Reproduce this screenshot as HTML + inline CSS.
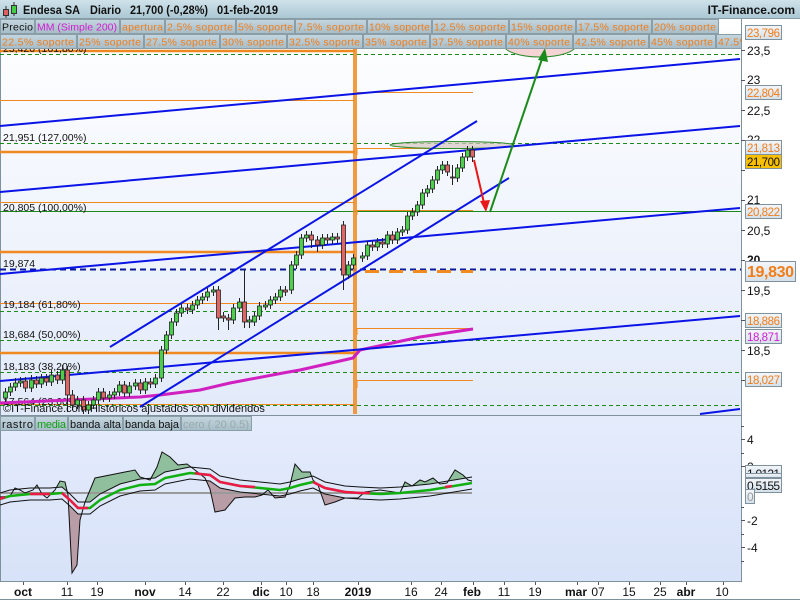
<!DOCTYPE html>
<html><head><meta charset="utf-8"><style>
body{margin:0;width:800px;height:600px;overflow:hidden;font-family:"Liberation Sans",sans-serif}
svg text{font-family:"Liberation Sans",sans-serif}
</style></head><body>
<svg width="800" height="600" viewBox="0 0 800 600" xmlns="http://www.w3.org/2000/svg">
<defs>
<linearGradient id="hd" x1="0" y1="0" x2="0" y2="1"><stop offset="0" stop-color="#cfe2ea"/><stop offset="1" stop-color="#a9c6d2"/></linearGradient>
<linearGradient id="bx" x1="0" y1="0" x2="0" y2="1"><stop offset="0" stop-color="#c4d6df"/><stop offset="1" stop-color="#a6bcc8"/></linearGradient>
<linearGradient id="mb" x1="0" y1="0" x2="0" y2="1"><stop offset="0" stop-color="#ffffff"/><stop offset="1" stop-color="#e2eafa"/></linearGradient>
<linearGradient id="ob" x1="0" y1="0" x2="0" y2="1"><stop offset="0" stop-color="#e4ecfc"/><stop offset="1" stop-color="#d8e2f8"/></linearGradient>
<linearGradient id="lb" x1="0" y1="0" x2="0" y2="1"><stop offset="0" stop-color="#f4f7fb"/><stop offset="1" stop-color="#d4e0ea"/></linearGradient>
<clipPath id="cg"><polygon points="0,493 10,490 30,488 50,488 62,487 70,494 78,502 90,502 100,494 120,484 140,479 155,478 165,472 175,470 190,467 200,468 210,469 220,476 240,480 260,482 280,484 290,482 300,479 313,476 325,482 345,486 360,487 380,488 400,487 430,484 472,477 472,416 0,416"/></clipPath>
<clipPath id="cr"><polygon points="0,505 10,502 30,500 50,500 62,499 70,506 78,514 90,514 100,506 120,496 140,491 155,490 165,484 175,482 190,479 200,480 210,481 220,488 240,492 260,494 280,496 290,494 300,491 313,488 325,494 345,498 360,499 380,500 400,499 430,496 472,489 472,582 0,582"/></clipPath>
</defs>
<rect width="800" height="600" fill="#fff"/>
<rect x="0" y="0" width="800" height="19" fill="url(#hd)"/>
<line x1="0" y1="18.5" x2="800" y2="18.5" stroke="#8a9ca6"/>
<line x1="6" y1="6" x2="6" y2="18" stroke="#333"/><rect x="3.5" y="9.5" width="5" height="6" fill="#e06060" stroke="#333"/>
<line x1="14" y1="2" x2="14" y2="16" stroke="#333"/><rect x="11.5" y="5.5" width="5" height="8" fill="#44cc44" stroke="#333"/>
<g font-size="12" font-weight="bold" fill="#111">
<text x="23" y="14" textLength="57" lengthAdjust="spacingAndGlyphs">Endesa SA</text><text x="90" y="14" textLength="31" lengthAdjust="spacingAndGlyphs">Diario</text><text x="130" y="14" textLength="78" lengthAdjust="spacingAndGlyphs">21,700 (-0,28%)</text><text x="217" y="14" textLength="61" lengthAdjust="spacingAndGlyphs">01-feb-2019</text>
<text x="795" y="14" text-anchor="end">IT-Finance.com</text></g>
<rect x="0" y="19" width="741" height="396" fill="url(#mb)"/>
<rect x="741" y="19" width="59" height="563" fill="#fff"/>
<rect x="0" y="416" width="741" height="166" fill="url(#ob)"/>
<line x1="0" y1="415.5" x2="741" y2="415.5" stroke="#7f919c"/>
<line x1="0" y1="581.5" x2="741" y2="581.5" stroke="#7f919c"/>
<line x1="741.5" y1="19" x2="741.5" y2="582" stroke="#7f919c"/>
<line x1="0.5" y1="19" x2="0.5" y2="582" stroke="#7f919c"/>

<g stroke="#1a8a1a" stroke-dasharray="4,3" stroke-width="1">
<line x1="0" y1="54.5" x2="741" y2="54.5"/><line x1="0" y1="143.5" x2="741" y2="143.5"/>
<line x1="0" y1="311.5" x2="741" y2="311.5"/><line x1="0" y1="340.5" x2="741" y2="340.5"/>
<line x1="0" y1="372.5" x2="741" y2="372.5"/><line x1="0" y1="405.5" x2="741" y2="405.5"/>
</g>
<line x1="0" y1="211.5" x2="741" y2="211.5" stroke="#1a8a1a"/>
<line x1="0" y1="269.5" x2="741" y2="269.5" stroke="#0a1a9a" stroke-width="2" stroke-dasharray="6,4"/>
<g stroke="#f08a20" fill="none">
<line x1="0" y1="51" x2="355" y2="51" stroke-width="2.5"/>
<line x1="0" y1="100.5" x2="355" y2="100.5"/>
<line x1="0" y1="152" x2="355" y2="152" stroke-width="2.5"/>
<line x1="0" y1="202.5" x2="355" y2="202.5"/>
<line x1="0" y1="252" x2="355" y2="252" stroke-width="2.5"/>
<line x1="0" y1="303.5" x2="355" y2="303.5"/>
<line x1="0" y1="353" x2="355" y2="353" stroke-width="2.5"/>
<line x1="0" y1="404.5" x2="355" y2="404.5"/>
<line x1="357" y1="92.5" x2="473" y2="92.5"/>
<polyline points="357,155 357,148.5 473,148.5"/>
<polyline points="357,215 357,210.5 473,210.5"/>
<line x1="365" y1="271.5" x2="473" y2="271.5" stroke-width="3" stroke-dasharray="14,10"/>
<polyline points="357,335 357,328.5 473,328.5"/>
<polyline points="357,388 357,380.5 473,380.5"/>
<line x1="355" y1="48" x2="355" y2="414" stroke-width="4" stroke-opacity="0.85"/>
</g>
<g font-size="10.5" fill="#111">
<text x="3" y="52">23,420 (161,80%)</text>
<text x="3" y="141">21,951 (127,00%)</text>
<text x="3" y="211">20,805 (100,00%)</text>
<text x="3" y="267">19,874</text>
<text x="3" y="308">19,184 (61,80%)</text>
<text x="3" y="338">18,684 (50,00%)</text>
<text x="3" y="370">18,183 (38,20%)</text>
<text x="3" y="405">17,564 (23,60%)</text>
</g>
<ellipse cx="540" cy="45" rx="36" ry="12" fill="#f4d4d4" stroke="#2a8a2a"/>
<ellipse cx="452" cy="145" rx="62" ry="3.5" fill="#d8c8c0" stroke="#2a8a2a" fill-opacity="0.7"/>
<polyline points="0,403 140,397 160,395 200,390 230,383 283,373 300,370 340,361 353,358 360,350 420,337 473,329" fill="none" stroke="#d020c0" stroke-width="3"/>
<g stroke="#0a14e6" stroke-width="2" fill="none">
<line x1="0" y1="126" x2="740" y2="59"/>
<line x1="0" y1="192" x2="740" y2="126"/>
<line x1="110" y1="347" x2="477" y2="121"/>
<line x1="140" y1="407" x2="509" y2="178"/>
<line x1="0" y1="274" x2="740" y2="208"/>
<line x1="0" y1="381" x2="740" y2="316"/>
<line x1="700" y1="414" x2="740" y2="409"/>
</g>
<line x1="490" y1="212" x2="543" y2="56" stroke="#1a8a1a" stroke-width="2"/>
<polygon points="545,48 538,60 548,62" fill="#1a8a1a"/>
<line x1="474" y1="160" x2="484" y2="203" stroke="#e81818" stroke-width="2"/>
<polygon points="486,212 480,201 490,200" fill="#e81818"/>
<path stroke="#222" stroke-width="1" fill="none" d="M5.5,388V402M10.5,383V396M15.5,378V391M20.5,377V387M25.5,377V392M31.5,375V392M36.5,376V388M41.5,374V388M46.5,374V386M51.5,370V386M57.5,371V384M62.5,365V384M67.5,366V412M72.5,390V410M77.5,396V409M83.5,396V414M88.5,401V414M93.5,396V409M98.5,388V404M103.5,388V402M109.5,391V402M114.5,388V399M119.5,381V396M124.5,381V397M129.5,382V397M135.5,379V390M140.5,379V394M145.5,378V394M150.5,378V388M155.5,374V388M161.5,346V382M166.5,331V354M171.5,318V339M176.5,309V326M181.5,304V317M187.5,304V314M192.5,301V314M197.5,296V309M202.5,293V304M207.5,288V301M213.5,286V296M218.5,286V330M223.5,312V322M228.5,314V330M233.5,304V324M239.5,298V312M244.5,270V328M249.5,316V328M254.5,312V326M259.5,302V320M265.5,301V310M270.5,296V309M275.5,293V304M280.5,286V301M285.5,286V296M291.5,261V294M296.5,251V269M301.5,234V259M306.5,231V242M311.5,231V248M317.5,236V252M322.5,234V249M327.5,234V244M332.5,233V244M337.5,233V243M343.5,221V290M348.5,261V279M353.5,254V269M362.5,252V262M367.5,241V260M372.5,241V251M377.5,238V251M382.5,238V248M387.5,231V248M392.5,231V244M397.5,228V244M402.5,226V236M407.5,212V234M412.5,208V220M417.5,201V216M422.5,189V209M427.5,185V197M432.5,176V193M437.5,166V184M442.5,161V174M447.5,161V176M452.5,165V185M457.5,164V182M462.5,153V172M467.5,146V161M472.5,146V162"/>
<g stroke="#222" stroke-width="0.8">
<g fill="#4cd04c">
<rect x="3.5" y="392" width="4" height="6"/><rect x="8.5" y="387" width="4" height="5"/><rect x="13.5" y="383" width="4" height="4"/><rect x="18.5" y="381" width="4" height="2"/>
<rect x="29.5" y="380" width="4" height="8"/><rect x="39.5" y="378" width="4" height="6"/><rect x="49.5" y="375" width="4" height="7"/><rect x="60.5" y="370" width="4" height="10"/>
<rect x="75.5" y="400" width="4" height="5"/><rect x="86.5" y="405" width="4" height="5"/><rect x="91.5" y="400" width="4" height="5"/><rect x="96.5" y="392" width="4" height="8"/>
<rect x="107.5" y="395" width="4" height="3"/><rect x="112.5" y="392" width="4" height="3"/><rect x="117.5" y="385" width="4" height="7"/><rect x="127.5" y="386" width="4" height="7"/>
<rect x="133.5" y="383" width="4" height="3"/><rect x="143.5" y="382" width="4" height="8"/><rect x="153.5" y="378" width="4" height="6"/><rect x="159.5" y="350" width="4" height="28"/>
<rect x="164.5" y="335" width="4" height="15"/><rect x="169.5" y="322" width="4" height="13"/><rect x="174.5" y="313" width="4" height="9"/><rect x="179.5" y="308" width="4" height="5"/>
<rect x="190.5" y="305" width="4" height="5"/><rect x="195.5" y="300" width="4" height="5"/><rect x="200.5" y="297" width="4" height="3"/><rect x="205.5" y="292" width="4" height="5"/><rect x="211.5" y="290" width="4" height="2"/>
<rect x="231.5" y="308" width="4" height="12"/><rect x="237.5" y="302" width="4" height="6"/><rect x="247.5" y="320" width="4" height="2"/><rect x="252.5" y="316" width="4" height="6"/>
<rect x="257.5" y="306" width="4" height="10"/><rect x="263.5" y="305" width="4" height="2"/><rect x="268.5" y="300" width="4" height="5"/><rect x="273.5" y="297" width="4" height="3"/><rect x="278.5" y="290" width="4" height="7"/>
<rect x="289.5" y="265" width="4" height="25"/><rect x="294.5" y="255" width="4" height="10"/><rect x="299.5" y="238" width="4" height="17"/><rect x="304.5" y="235" width="4" height="3"/>
<rect x="320.5" y="238" width="4" height="7"/><rect x="330.5" y="237" width="4" height="3"/><rect x="346.5" y="265" width="4" height="10"/><rect x="351.5" y="258" width="4" height="7"/>
<rect x="360.5" y="256" width="4" height="2"/><rect x="365.5" y="245" width="4" height="11"/><rect x="375.5" y="242" width="4" height="5"/><rect x="385.5" y="235" width="4" height="9"/>
<rect x="395.5" y="232" width="4" height="8"/><rect x="400.5" y="230" width="4" height="2"/><rect x="405.5" y="216" width="4" height="14"/><rect x="410.5" y="212" width="4" height="4"/>
<rect x="415.5" y="205" width="4" height="7"/><rect x="420.5" y="193" width="4" height="12"/><rect x="425.5" y="189" width="4" height="4"/><rect x="430.5" y="180" width="4" height="9"/>
<rect x="435.5" y="170" width="4" height="10"/><rect x="440.5" y="165" width="4" height="5"/><rect x="455.5" y="168" width="4" height="10"/><rect x="460.5" y="157" width="4" height="11"/><rect x="465.5" y="150" width="4" height="7"/>
</g>
<g fill="#e06666">
<rect x="23.5" y="381" width="4" height="7"/><rect x="34.5" y="380" width="4" height="4"/><rect x="44.5" y="378" width="4" height="4"/><rect x="55.5" y="375" width="4" height="5"/>
<rect x="65.5" y="370" width="4" height="25"/><rect x="70.5" y="395" width="4" height="10"/><rect x="81.5" y="400" width="4" height="10"/><rect x="101.5" y="392" width="4" height="6"/>
<rect x="122.5" y="385" width="4" height="8"/><rect x="138.5" y="383" width="4" height="7"/><rect x="148.5" y="382" width="4" height="2"/><rect x="185.5" y="308" width="4" height="2"/>
<rect x="216.5" y="290" width="4" height="28"/><rect x="221.5" y="316" width="4" height="2"/><rect x="226.5" y="318" width="4" height="2"/><rect x="242.5" y="302" width="4" height="20"/>
<rect x="283.5" y="290" width="4" height="2"/><rect x="309.5" y="235" width="4" height="5"/><rect x="315.5" y="240" width="4" height="5"/><rect x="325.5" y="238" width="4" height="2"/>
<rect x="335.5" y="237" width="4" height="2"/><rect x="341.5" y="225" width="4" height="50"/><rect x="370.5" y="245" width="4" height="2"/><rect x="380.5" y="242" width="4" height="2"/>
<rect x="390.5" y="235" width="4" height="5"/><rect x="445.5" y="165" width="4" height="7"/><rect x="450.5" y="177" width="4" height="1"/><rect x="470.5" y="150" width="4" height="7"/>
</g>
</g>
<text x="3" y="412" font-size="11" fill="#111">©IT-Finance.com Históricos ajustados con dividendos</text>

<g font-size="10.5" fill="#f07d1a">
<rect x="0.5" y="19.5" width="34" height="14" fill="url(#bx)" stroke="#8a9ea8"/><text x="2" y="30.5" fill="#111" textLength="31">Precio</text>
<rect x="35.5" y="19.5" width="84" height="14" fill="url(#bx)" stroke="#8a9ea8"/><text x="37" y="30.5" fill="#d21cd2" textLength="80">MM (Simple 200)</text>
<rect x="120.5" y="19.5" width="44" height="14" fill="url(#bx)" stroke="#8a9ea8"/><text x="122" y="30.5" textLength="41">apertura</text>
<rect x="165.5" y="19.5" width="70" height="14" fill="url(#bx)" stroke="#8a9ea8"/><text x="167" y="30.5" textLength="66">2.5% soporte</text>
<rect x="236.5" y="19.5" width="58" height="14" fill="url(#bx)" stroke="#8a9ea8"/><text x="238" y="30.5" textLength="55">5% soporte</text>
<rect x="295.5" y="19.5" width="71" height="14" fill="url(#bx)" stroke="#8a9ea8"/><text x="297" y="30.5" textLength="67">7.5% soporte</text>
<rect x="367.5" y="19.5" width="64" height="14" fill="url(#bx)" stroke="#8a9ea8"/><text x="369" y="30.5" textLength="61">10% soporte</text>
<rect x="432.5" y="19.5" width="76" height="14" fill="url(#bx)" stroke="#8a9ea8"/><text x="434" y="30.5" textLength="72">12.5% soporte</text>
<rect x="509.5" y="19.5" width="66" height="14" fill="url(#bx)" stroke="#8a9ea8"/><text x="511" y="30.5" textLength="62">15% soporte</text>
<rect x="576.5" y="19.5" width="75" height="14" fill="url(#bx)" stroke="#8a9ea8"/><text x="578" y="30.5" textLength="71">17.5% soporte</text>
<rect x="652.5" y="19.5" width="66" height="14" fill="url(#bx)" stroke="#8a9ea8"/><text x="654" y="30.5" textLength="62">20% soporte</text>
<rect x="0.5" y="34.5" width="76" height="14" fill="url(#bx)" stroke="#8a9ea8"/><text x="2" y="45.5" textLength="72">22.5% soporte</text>
<rect x="77.5" y="34.5" width="66" height="14" fill="url(#bx)" stroke="#8a9ea8"/><text x="79" y="45.5" textLength="62">25% soporte</text>
<rect x="144.5" y="34.5" width="75" height="14" fill="url(#bx)" stroke="#8a9ea8"/><text x="146" y="45.5" textLength="71">27.5% soporte</text>
<rect x="220.5" y="34.5" width="66" height="14" fill="url(#bx)" stroke="#8a9ea8"/><text x="222" y="45.5" textLength="62">30% soporte</text>
<rect x="287.5" y="34.5" width="75" height="14" fill="url(#bx)" stroke="#8a9ea8"/><text x="289" y="45.5" textLength="71">32.5% soporte</text>
<rect x="363.5" y="34.5" width="66" height="14" fill="url(#bx)" stroke="#8a9ea8"/><text x="365" y="45.5" textLength="62">35% soporte</text>
<rect x="430.5" y="34.5" width="75" height="14" fill="url(#bx)" stroke="#8a9ea8"/><text x="432" y="45.5" textLength="71">37.5% soporte</text>
<rect x="506.5" y="34.5" width="66" height="14" fill="url(#bx)" stroke="#8a9ea8"/><text x="508" y="45.5" textLength="62">40% soporte</text>
<rect x="573.5" y="34.5" width="75" height="14" fill="url(#bx)" stroke="#8a9ea8"/><text x="575" y="45.5" textLength="71">42.5% soporte</text>
<rect x="649.5" y="34.5" width="66" height="14" fill="url(#bx)" stroke="#8a9ea8"/><text x="651" y="45.5" textLength="62">45% soporte</text>
<svg x="716" y="34" width="25" height="15"><rect x="0.5" y="0.5" width="40" height="14" fill="url(#bx)" stroke="#8a9ea8"/><text x="2" y="11.5" textLength="71">47.5% soporte</text></svg>
</g>

<g stroke="#556" stroke-width="1">
<line x1="741" y1="50.5" x2="745" y2="50.5"/><line x1="741" y1="80.5" x2="745" y2="80.5"/><line x1="741" y1="110.5" x2="745" y2="110.5"/>
<line x1="741" y1="140.5" x2="745" y2="140.5"/><line x1="741" y1="170.5" x2="745" y2="170.5"/><line x1="741" y1="200.5" x2="745" y2="200.5"/>
<line x1="741" y1="230.5" x2="745" y2="230.5"/><line x1="741" y1="260.5" x2="745" y2="260.5"/><line x1="741" y1="290.5" x2="745" y2="290.5"/>
<line x1="741" y1="320.5" x2="745" y2="320.5"/><line x1="741" y1="350.5" x2="745" y2="350.5"/><line x1="741" y1="380.5" x2="745" y2="380.5"/>
</g>
<g font-size="12" fill="#111">
<text x="747" y="55">23,5</text><text x="747" y="84">23</text><text x="747" y="115">22,5</text><text x="747" y="144">22</text>
<text x="747" y="204">21</text><text x="747" y="235">20,5</text><text x="747" y="264" font-weight="bold">20</text><text x="747" y="295">19,5</text><text x="747" y="355">18,5</text>
</g>
<g font-size="11.5" fill="#f07d1a">
<rect x="745.5" y="25.5" width="36" height="14" fill="url(#lb)" stroke="#7f919c"/><text x="747" y="37" textLength="33">23,796</text>
<rect x="745.5" y="85.5" width="36" height="14" fill="url(#lb)" stroke="#7f919c"/><text x="747" y="97" textLength="33">22,804</text>
<rect x="745.5" y="140.5" width="36" height="14" fill="url(#lb)" stroke="#7f919c"/><text x="747" y="152" textLength="33">21,813</text>
<rect x="745.5" y="154.5" width="36" height="14" fill="#f8c000" stroke="#7f919c"/><text x="747" y="166" fill="#111" textLength="33">21,700</text>
<rect x="745.5" y="204.5" width="36" height="14" fill="url(#lb)" stroke="#7f919c"/><text x="747" y="216" textLength="33">20,822</text>
<rect x="745.5" y="261.5" width="50" height="20" fill="url(#lb)" stroke="#7f919c"/><text x="747" y="277" font-size="16" font-weight="bold" textLength="47">19,830</text>
<rect x="745.5" y="313.5" width="36" height="14" fill="url(#lb)" stroke="#7f919c"/><text x="747" y="325" textLength="33">18,886</text>
<rect x="745.5" y="329.5" width="36" height="14" fill="url(#lb)" stroke="#7f919c"/><text x="747" y="341" fill="#d21cd2" textLength="33">18,871</text>
<rect x="745.5" y="372.5" width="36" height="14" fill="url(#lb)" stroke="#7f919c"/><text x="747" y="384" textLength="33">18,027</text>
</g>

<g clip-path="url(#cg)"><polygon fill="#8fbf9c" points="0,497 10,496 15,488 20,490 25,493 33,490 37,485 42,494 47,498 55,490 60,481 65,482 68,495 72,573 77,565 80,520 85,502 95,478 110,475 125,472 135,470 140,477 150,480 157,467 162,452 170,457 178,465 187,464 195,470 205,478 210,489 215,512 225,510 235,498 245,497 255,497 262,495 268,490 275,498 285,497 290,485 295,464 302,472 310,472 313,480 318,485 325,505 335,502 345,498 358,498 365,492 380,490 400,493 405,482 412,486 420,480 425,482 433,478 440,484 447,483 455,470 463,475 468,480 472,481 472,477 430,484 400,487 380,488 360,487 345,486 325,482 313,476 300,479 290,482 280,484 260,482 240,480 220,476 210,469 200,468 190,467 175,470 165,472 155,478 140,479 120,484 100,494 90,502 78,502 70,494 62,487 50,488 30,488 10,490 0,493"/></g>
<g clip-path="url(#cr)"><polygon fill="#b89ca6" points="0,497 10,496 15,488 20,490 25,493 33,490 37,485 42,494 47,498 55,490 60,481 65,482 68,495 72,573 77,565 80,520 85,502 95,478 110,475 125,472 135,470 140,477 150,480 157,467 162,452 170,457 178,465 187,464 195,470 205,478 210,489 215,512 225,510 235,498 245,497 255,497 262,495 268,490 275,498 285,497 290,485 295,464 302,472 310,472 313,480 318,485 325,505 335,502 345,498 358,498 365,492 380,490 400,493 405,482 412,486 420,480 425,482 433,478 440,484 447,483 455,470 463,475 468,480 472,481 472,489 430,496 400,499 380,500 360,499 345,498 325,494 313,488 300,491 290,494 280,496 260,494 240,492 220,488 210,481 200,480 190,479 175,482 165,484 155,490 140,491 120,496 100,506 90,514 78,514 70,506 62,499 50,500 30,500 10,502 0,505"/></g>
<line x1="0" y1="493" x2="472" y2="493" stroke="#9a9a9a" stroke-width="2"/>
<g fill="none" stroke="#111" stroke-width="1">
<polyline points="0,497 10,496 15,488 20,490 25,493 33,490 37,485 42,494 47,498 55,490 60,481 65,482 68,495 72,573 77,565 80,520 85,502 95,478 110,475 125,472 135,470 140,477 150,480 157,467 162,452 170,457 178,465 187,464 195,470 205,478 210,489 215,512 225,510 235,498 245,497 255,497 262,495 268,490 275,498 285,497 290,485 295,464 302,472 310,472 313,480 318,485 325,505 335,502 345,498 358,498 365,492 380,490 400,493 405,482 412,486 420,480 425,482 433,478 440,484 447,483 455,470 463,475 468,480 472,481"/>
<polyline points="0,493 10,490 30,488 50,488 62,487 70,494 78,502 90,502 100,494 120,484 140,479 155,478 165,472 175,470 190,467 200,468 210,469 220,476 240,480 260,482 280,484 290,482 300,479 313,476 325,482 345,486 360,487 380,488 400,487 430,484 472,477"/>
<polyline points="0,505 10,502 30,500 50,500 62,499 70,506 78,514 90,514 100,506 120,496 140,491 155,490 165,484 175,482 190,479 200,480 210,481 220,488 240,492 260,494 280,496 290,494 300,491 313,488 325,494 345,498 360,499 380,500 400,499 430,496 472,489"/>
</g>
<polyline fill="none" stroke="#10b010" stroke-width="2.5" points="0,499 10,496 30,494 50,494 62,493 70,500 78,508 90,508 100,500 120,490 140,485 155,484 165,478 175,476 190,473 200,474 210,475 220,482 240,486 260,488 280,490 290,488 300,485 313,482 325,488 345,492 360,493 380,494 400,493 430,490 472,483"/>
<g fill="none" stroke="#f01848" stroke-width="2.5">
<polyline points="0,499 5,497"/><polyline points="30,494 50,494"/>
<polyline points="62,493 70,500 78,508 88,508"/>
<polyline points="195,473 200,474 210,475 220,482 240,486 255,487"/>
<polyline points="313,482 325,488 345,492 360,493 370,493"/>
<polyline points="445,487 452,486"/>
</g>
<g font-size="11">
<rect x="0.5" y="416.5" width="34" height="14" fill="url(#bx)" stroke="#8a9ea8"/><text x="2" y="428" fill="#111" textLength="31">rastro</text>
<rect x="35.5" y="416.5" width="32" height="14" fill="url(#bx)" stroke="#8a9ea8"/><text x="37" y="428" fill="#10a010" textLength="29">media</text>
<rect x="68.5" y="416.5" width="54" height="14" fill="url(#bx)" stroke="#8a9ea8"/><text x="70" y="428" fill="#111" textLength="51">banda alta</text>
<rect x="123.5" y="416.5" width="57" height="14" fill="url(#bx)" stroke="#8a9ea8"/><text x="125" y="428" fill="#111" textLength="54">banda baja</text>
<rect x="181.5" y="416.5" width="70" height="14" fill="url(#bx)" stroke="#8a9ea8"/><text x="183" y="428" fill="#9aa" textLength="66">cero ( 20 0.5)</text>
</g>
<g stroke="#556"><line x1="741" y1="439.5" x2="745" y2="439.5"/><line x1="741" y1="466.5" x2="745" y2="466.5"/><line x1="741" y1="520.5" x2="745" y2="520.5"/><line x1="741" y1="547.5" x2="745" y2="547.5"/>
<line x1="741" y1="426.5" x2="744" y2="426.5"/><line x1="741" y1="453.5" x2="744" y2="453.5"/><line x1="741" y1="507.5" x2="744" y2="507.5"/><line x1="741" y1="534.5" x2="744" y2="534.5"/><line x1="741" y1="561.5" x2="744" y2="561.5"/></g>
<g font-size="12" fill="#111"><text x="747" y="444">4</text><text x="747" y="471">2</text><text x="747" y="525">-2</text><text x="747" y="552">-4</text></g>
<rect x="745.5" y="465.5" width="36" height="11" fill="url(#lb)" stroke="#7f919c"/><text x="747" y="478" font-size="12" fill="#111" textLength="33">1,0121</text>
<rect x="745.5" y="473.5" width="36" height="4" fill="url(#lb)" stroke="#7f919c"/>
<rect x="745.5" y="478.5" width="36" height="14" fill="url(#lb)" stroke="#7f919c"/><text x="747" y="490" font-size="12" fill="#111" textLength="33">0,5155</text>
<rect x="745.5" y="489.5" width="9" height="14" fill="url(#lb)" stroke="#7f919c"/><text x="747" y="501" font-size="12" fill="#999">0</text>

<rect x="0" y="582" width="800" height="18" fill="#fff"/>
<g stroke="#556"><line x1="23.5" y1="582" x2="23.5" y2="585"/><line x1="67.5" y1="582" x2="67.5" y2="585"/><line x1="97.5" y1="582" x2="97.5" y2="585"/><line x1="145.5" y1="582" x2="145.5" y2="585"/><line x1="185.5" y1="582" x2="185.5" y2="585"/><line x1="223.5" y1="582" x2="223.5" y2="585"/><line x1="261.5" y1="582" x2="261.5" y2="585"/><line x1="286.5" y1="582" x2="286.5" y2="585"/><line x1="313.5" y1="582" x2="313.5" y2="585"/><line x1="358.5" y1="582" x2="358.5" y2="585"/><line x1="411.5" y1="582" x2="411.5" y2="585"/><line x1="441.5" y1="582" x2="441.5" y2="585"/><line x1="473.5" y1="582" x2="473.5" y2="585"/><line x1="504.5" y1="582" x2="504.5" y2="585"/><line x1="535.5" y1="582" x2="535.5" y2="585"/><line x1="577.5" y1="582" x2="577.5" y2="585"/><line x1="598.5" y1="582" x2="598.5" y2="585"/><line x1="629.5" y1="582" x2="629.5" y2="585"/><line x1="660.5" y1="582" x2="660.5" y2="585"/><line x1="686.5" y1="582" x2="686.5" y2="585"/><line x1="723.5" y1="582" x2="723.5" y2="585"/></g>
<g font-size="12" fill="#111" text-anchor="middle">
<text x="23" y="596" font-weight="bold">oct</text><text x="67" y="596">11</text><text x="97" y="596">19</text><text x="145" y="596" font-weight="bold">nov</text>
<text x="185" y="596">14</text><text x="223" y="596">22</text><text x="261" y="596" font-weight="bold">dic</text><text x="286" y="596">10</text><text x="313" y="596">18</text>
<text x="358" y="596" font-weight="bold">2019</text><text x="411" y="596">16</text><text x="441" y="596">24</text><text x="472" y="596" font-weight="bold">feb</text>
<text x="504" y="596">11</text><text x="535" y="596">19</text><text x="576" y="596" font-weight="bold">mar</text><text x="598" y="596">07</text><text x="629" y="596">15</text>
<text x="660" y="596">25</text><text x="686" y="596" font-weight="bold">abr</text><text x="722" y="596">10</text>
</g>
<line x1="0" y1="599.5" x2="800" y2="599.5" stroke="#7f919c"/>
</svg>
</body></html>
